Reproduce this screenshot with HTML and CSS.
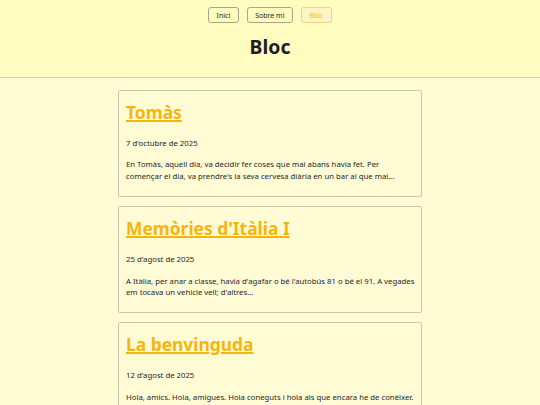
FILE: index.html
```html
<!DOCTYPE html>
<html lang="ca">
<head>
<meta charset="utf-8">
<title>Bloc</title>
<link rel="stylesheet" href="styles.css">
</head>
<body>
<header class="site-header">
  <nav class="nav">
    <a class="nav-btn" href="#">Inici</a>
    <a class="nav-btn" href="#">Sobre mi</a>
    <a class="nav-btn active" href="#">Bloc</a>
  </nav>
  <h1 class="page-title">Bloc</h1>
</header>
<main class="posts">
  <article class="card">
    <h2 class="card-title"><a href="#">Tomàs</a></h2>
    <p class="date">7 d'octubre de 2025</p>
    <p class="excerpt">En Tomàs, aquell dia, va decidir fer coses que mai abans havia fet. Per començar el dia, va prendre's la seva cervesa diària en un bar al que mai...</p>
  </article>
  <article class="card">
    <h2 class="card-title"><a href="#">Memòries d'Itàlia I</a></h2>
    <p class="date">25 d'agost de 2025</p>
    <p class="excerpt">A Itàlia, per anar a classe, havia d'agafar o bé l'autobús 81 o bé el 91. A vegades em tocava un vehicle vell; d'altres...</p>
  </article>
  <article class="card">
    <h2 class="card-title"><a href="#">La benvinguda</a></h2>
    <p class="date">12 d'agost de 2025</p>
    <p class="excerpt">Hola, amics. Hola, amigues. Hola coneguts i hola als que encara he de conèixer. Aquest és el meu bloc...</p>
  </article>
</main>
</body>
</html>
```

FILE: styles.css
```css
html, body {
  margin: 0;
  padding: 0;
}
body {
  background: #fffbd5;
  font-family: "Noto Sans", "Open Sans", sans-serif;
  color: #262626;
  overflow: hidden;
}
.site-header {
  background: #fffcbf;
  border-bottom: 1px solid #cfcab0;
  padding: 7px 0 17px;
  text-align: center;
}
.nav {
  display: flex;
  justify-content: center;
  gap: 8px;
}
.nav-btn {
  display: inline-flex;
  align-items: center;
  height: 16px;
  box-sizing: border-box;
  padding: 0 7.5px;
  border: 1px solid #aaa58a;
  border-radius: 3px;
  font-size: 7px;
  color: #262626;
  text-decoration: none;
}
.nav-btn.active {
  border-color: #f3d27a;
  background: #fff4c4;
  color: #f5b42a;
}
.page-title {
  margin: 11px 0 0;
  font-size: 19.4px;
  font-weight: 700;
  color: #1e1e1e;
  line-height: 26px;
}
.posts {
  display: flex;
  flex-direction: column;
  align-items: center;
  gap: 9px;
  padding-top: 11.5px;
}
.card {
  width: 304px;
  box-sizing: border-box;
  border: 1px solid #cbc6ad;
  border-radius: 2px;
  padding: 8px 4px 13.5px 7px;
}
.card-title {
  margin: 0;
  font-size: 17.4px;
  font-weight: 700;
  line-height: 26px;
}
.card-title a {
  color: #f6b50e;
  text-decoration: underline;
  text-decoration-thickness: 1.5px;
}
.date {
  margin: 12px 0 0;
  font-size: 7.75px;
  line-height: 12px;
}
.excerpt {
  margin: 10.75px 0 0;
  font-size: 7.75px;
  line-height: 11.5px;
}
```
